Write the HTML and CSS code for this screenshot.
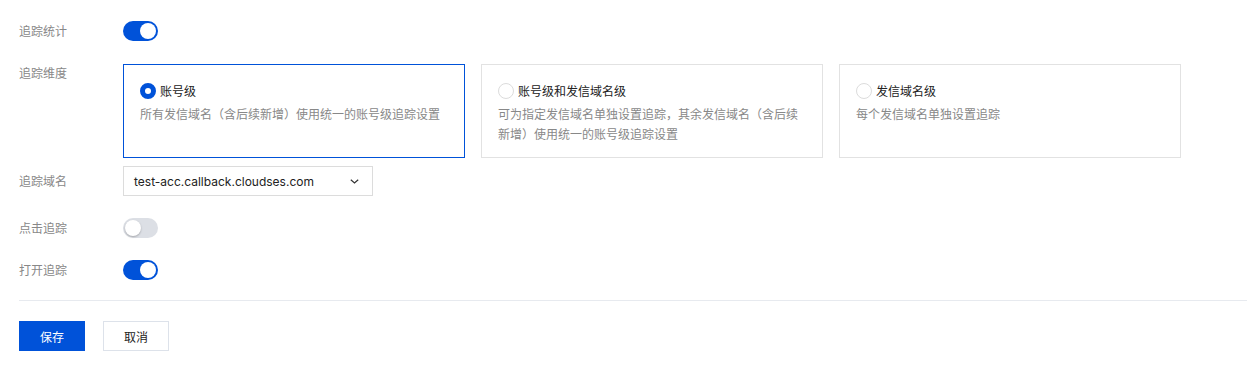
FILE: index.html
```html
<!DOCTYPE html>
<html lang="zh-CN">
<head>
<meta charset="utf-8">
<title>追踪设置</title>
<link rel="stylesheet" href="styles.css">
</head>
<body>
<form class="form">
  <div class="row row-toggle1">
    <label class="label">追踪统计</label>
    <div class="control"><span class="switch on"><span class="knob"></span></span></div>
  </div>

  <div class="row row-cards">
    <label class="label label-top">追踪维度</label>
    <div class="cards">
      <div class="card selected">
        <div class="card-title"><span class="radio checked"></span><span>账号级</span></div>
        <div class="card-desc">所有发信域名（含后续新增）使用统一的账号级追踪设置</div>
      </div>
      <div class="card">
        <div class="card-title"><span class="radio"></span><span>账号级和发信域名级</span></div>
        <div class="card-desc">可为指定发信域名单独设置追踪，其余发信域名（含后续新增）使用统一的账号级追踪设置</div>
      </div>
      <div class="card">
        <div class="card-title"><span class="radio"></span><span>发信域名级</span></div>
        <div class="card-desc">每个发信域名单独设置追踪</div>
      </div>
    </div>
  </div>

  <div class="row row-select">
    <label class="label">追踪域名</label>
    <div class="select">
      <span class="select-value">test-acc.callback.cloudses.com</span>
      <svg class="chevron" width="9" height="5" viewBox="0 0 9 5"><path d="M0.8 0.8l3.7 3.2 3.7-3.2" fill="none" stroke="#333" stroke-width="1.2"/></svg>
    </div>
  </div>

  <div class="row row-toggle2">
    <label class="label">点击追踪</label>
    <div class="control"><span class="switch"><span class="knob"></span></span></div>
  </div>

  <div class="row row-toggle3">
    <label class="label">打开追踪</label>
    <div class="control"><span class="switch on"><span class="knob"></span></span></div>
  </div>

  <div class="divider"></div>

  <div class="actions">
    <button type="button" class="btn btn-primary">保存</button>
    <button type="button" class="btn btn-default">取消</button>
  </div>
</form>
</body>
</html>
```

FILE: styles.css
```css
* { box-sizing: border-box; }

html, body {
  margin: 0;
  padding: 0;
  background: #fff;
}

body {
  font-family: "Noto Sans CJK SC", "Noto Sans", sans-serif;
  font-size: 12px;
  color: #222;
}

.form {
  padding: 21px 0 0 19px;
}

.row {
  display: flex;
  align-items: center;
}

.label {
  width: 104px;
  flex: none;
  color: #888;
  font-size: 12px;
  line-height: 20px;
}

.label-top {
  align-self: flex-start;
  margin-top: -1px;
}

.row-cards { margin-top: 23px; align-items: flex-start; }
.row-select { margin-top: 8px; }
.row-toggle2 { margin-top: 22px; }
.row-toggle3 { margin-top: 22px; }

.control { display: flex; align-items: center; height: 20px; }

.switch {
  position: relative;
  display: inline-block;
  width: 35px;
  height: 20px;
  border-radius: 10px;
  background: #dcdfe5;
}
.switch.on { background: #0052d9; }

.knob {
  position: absolute;
  top: 2px;
  left: 2px;
  width: 16px;
  height: 16px;
  border-radius: 50%;
  background: #fff;
  box-shadow: 0 1px 2px rgba(0,0,0,0.25);
}
.switch.on .knob { left: 17px; box-shadow: none; }

.cards {
  display: flex;
  gap: 16px;
}

.card {
  width: 342px;
  height: 94px;
  border: 1px solid #e2e2e2;
  padding: 15px 16px 0 16px;
  background: #fff;
}
.card.selected { border-color: #0052d9; }

.card-title {
  display: flex;
  align-items: center;
  height: 20px;
  color: #222;
  font-size: 12px;
  gap: 4px;
}

.radio {
  width: 16px;
  height: 16px;
  border-radius: 50%;
  border: 1px solid #dcdcdc;
  background: #fff;
  flex: none;
  margin-top: 1px;
}
.radio.checked { border: 5px solid #0052d9; }

.card-desc {
  margin-top: 4px;
  color: #888;
  font-size: 12px;
  line-height: 20px;
}

.select {
  width: 250px;
  height: 30px;
  border: 1px solid #dcdcdc;
  display: flex;
  align-items: center;
  justify-content: space-between;
  padding: 0 13px 0 10px;
}
.select-value {
  font-family: "Inter", "Liberation Sans", sans-serif;
  font-size: 12px;
  color: #222;
}
.chevron { display: block; margin-top: 1px; }

.divider {
  height: 1px;
  background: #e7eaef;
  margin-top: 20px;
}

.actions {
  display: flex;
  gap: 18px;
  margin-top: 20px;
}

.btn {
  width: 66px;
  height: 30px;
  font-family: "Noto Sans CJK SC", sans-serif;
  font-size: 12px;
  border: 1px solid #dcdcdc;
  background: #fff;
  color: #222;
  padding: 0;
  cursor: pointer;
}
.btn-primary {
  background: #0052d9;
  border-color: #0052d9;
  color: #fff;
}
.btn-default { border-color: #dde2ea; }
```
